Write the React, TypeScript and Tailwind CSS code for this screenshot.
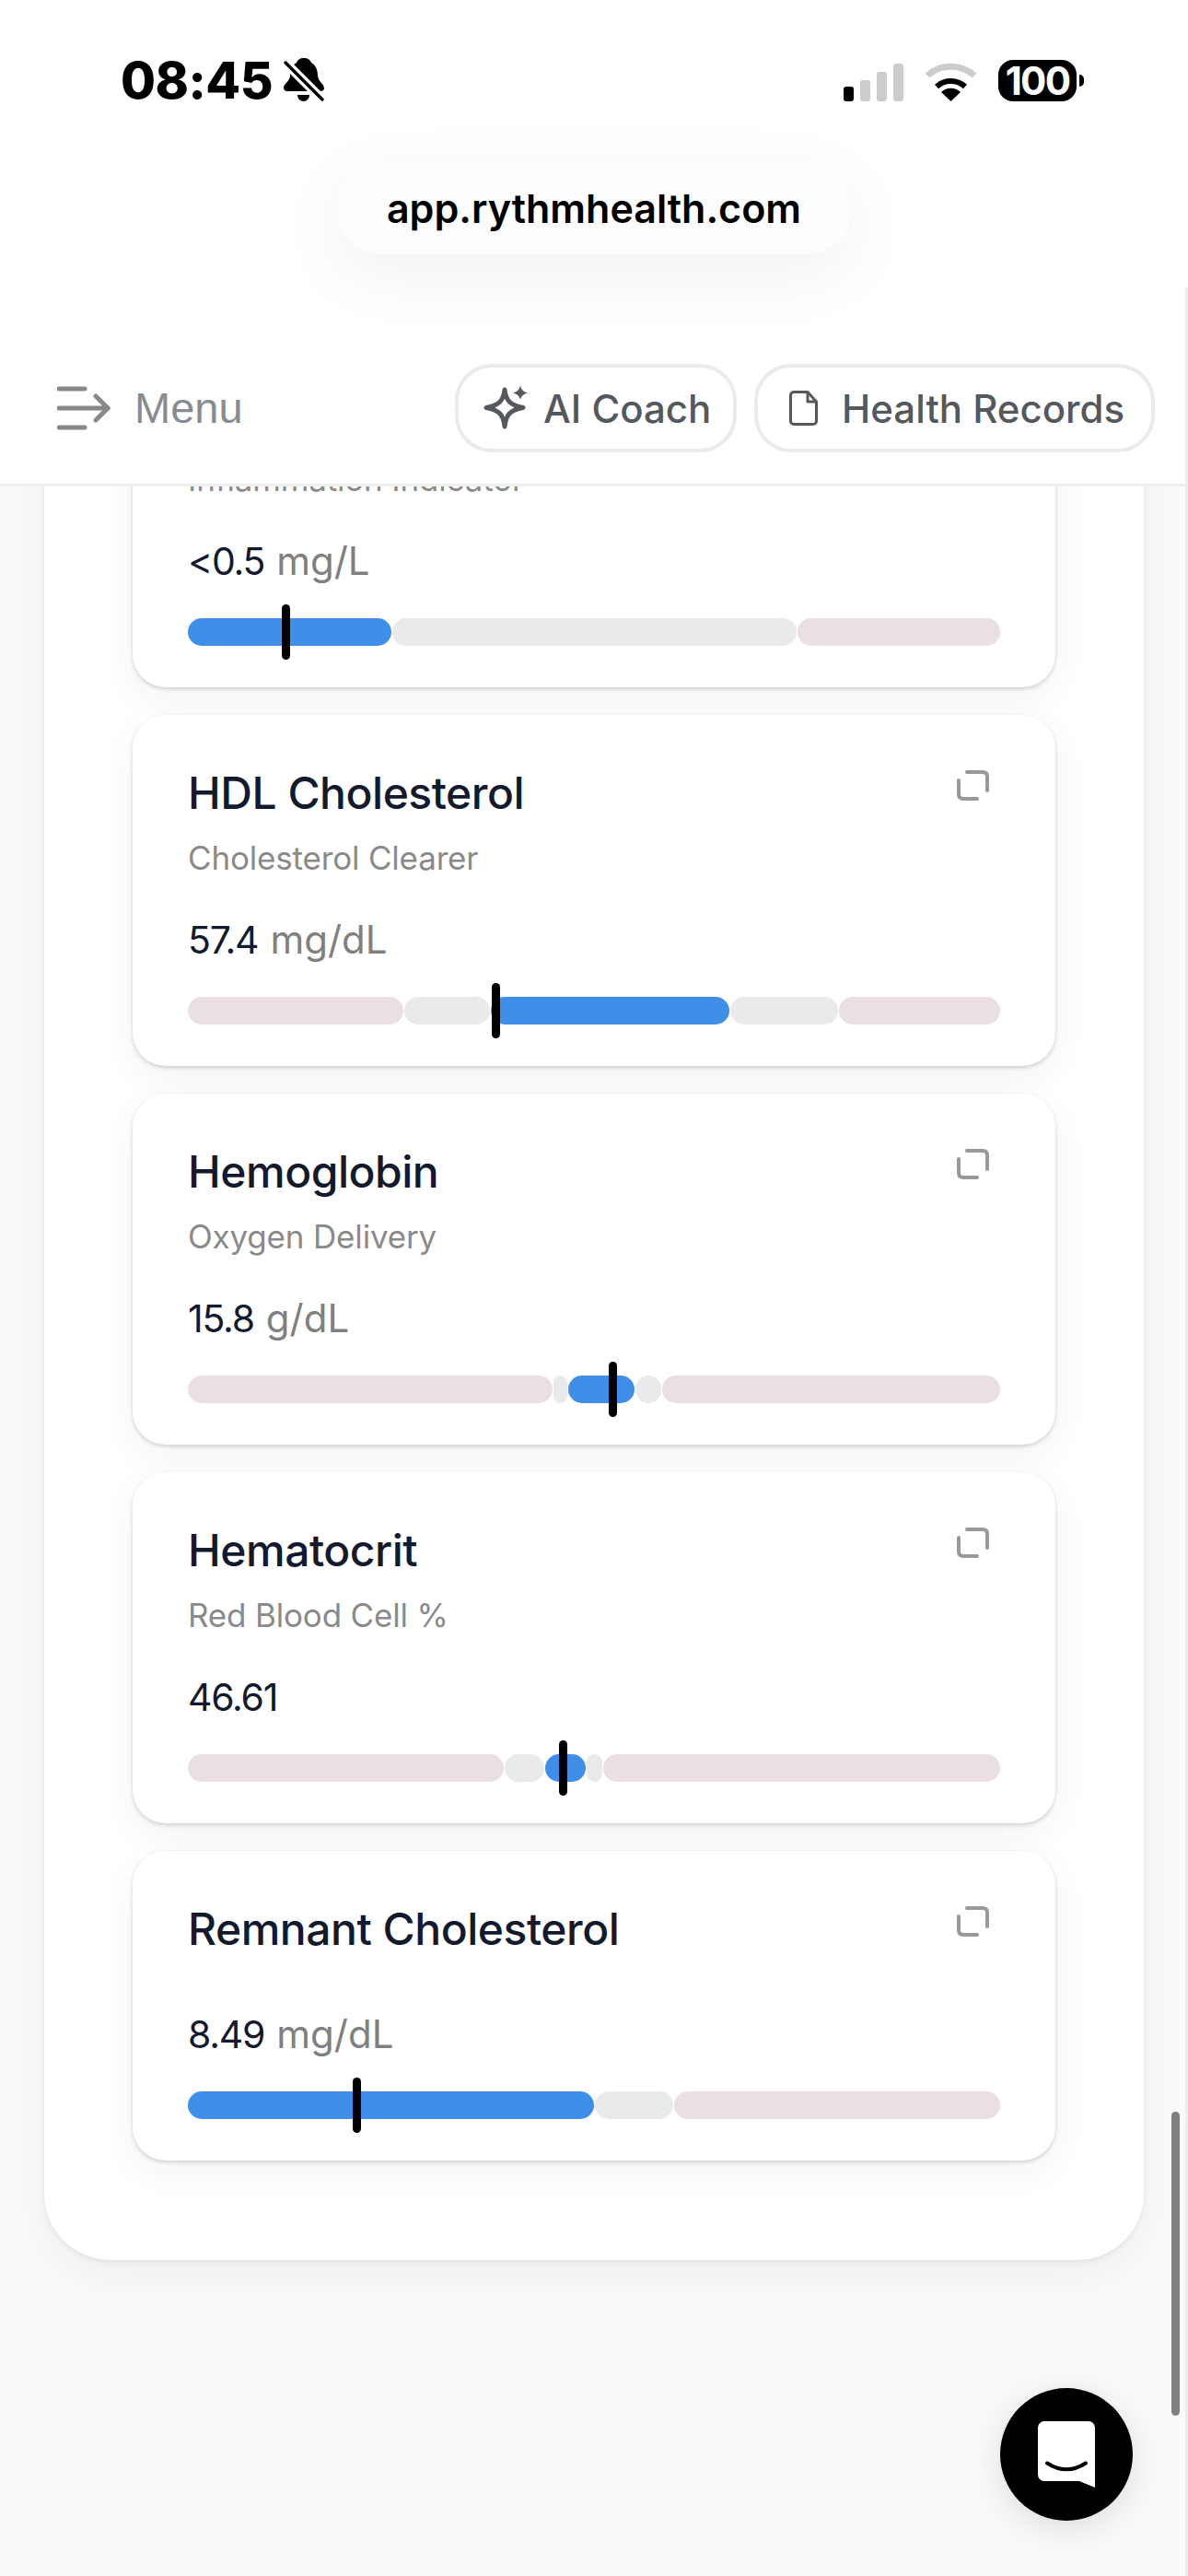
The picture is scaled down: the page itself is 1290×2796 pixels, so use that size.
const BLUE = "bg-[#3f8eea]";
const GRAY = "bg-[#eaeaea]";
const PINK = "bg-[#eadfe3]";

type Seg = { w: number; c: string };
type Marker = {
  title: string;
  sub?: string;
  value: string;
  unit?: string;
  at: number;
  segs: Seg[];
};

const markers: Marker[] = [
  {
    title: "hs-CRP",
    sub: "Inflammation Indicator",
    value: "<0.5",
    unit: "mg/L",
    at: 102,
    segs: [
      { w: 221, c: BLUE },
      { w: 439, c: GRAY },
      { w: 220, c: PINK },
    ],
  },
  {
    title: "HDL Cholesterol",
    sub: "Cholesterol Clearer",
    value: "57.4",
    unit: "mg/dL",
    at: 330,
    segs: [
      { w: 234, c: PINK },
      { w: 93, c: GRAY },
      { w: 259, c: BLUE },
      { w: 117, c: GRAY },
      { w: 175, c: PINK },
    ],
  },
  {
    title: "Hemoglobin",
    sub: "Oxygen Delivery",
    value: "15.8",
    unit: "g/dL",
    at: 457,
    segs: [
      { w: 396, c: PINK },
      { w: 15, c: GRAY },
      { w: 72, c: BLUE },
      { w: 28, c: GRAY },
      { w: 367, c: PINK },
    ],
  },
  {
    title: "Hematocrit",
    sub: "Red Blood Cell %",
    value: "46.61",
    at: 403,
    segs: [
      { w: 343, c: PINK },
      { w: 43, c: GRAY },
      { w: 44, c: BLUE },
      { w: 17, c: GRAY },
      { w: 431, c: PINK },
    ],
  },
  {
    title: "Remnant Cholesterol",
    value: "8.49",
    unit: "mg/dL",
    at: 179,
    segs: [
      { w: 441, c: BLUE },
      { w: 85, c: GRAY },
      { w: 354, c: PINK },
    ],
  },
];

function MarkerCard({ m }: { m: Marker }) {
  return (
    <div className="rounded-[36px] bg-white px-[60px] pt-[57px] pb-[45px] shadow-[0_2px_4px_rgba(0,0,0,0.16),0_12px_40px_rgba(0,0,0,0.05)]">
      <div className="flex items-start justify-between">
        <h3 className="text-[48px] leading-[56px] font-medium tracking-[-0.01em] text-[#141a2e]">{m.title}</h3>
        <svg className="mt-[2px] mr-[12px] h-[36px] w-[36px]" viewBox="0 0 36 36" fill="none" stroke="#999" strokeWidth="4" strokeLinecap="round">
          <path d="M12 3H29Q34 3 34 8V23" />
          <path d="M3 12V27Q3 32 8 32H23" />
        </svg>
      </div>
      {m.sub && <p className="mt-[20px] text-[35px] leading-[44px] tracking-[-0.005em] text-[#8a8a8a]">{m.sub}</p>}
      <p className={`${m.sub ? "mt-[43px]" : "mt-[62px]"} text-[41px] leading-[48px] tracking-[-0.03em] text-[#141a2e]`}>
        {m.value}
        <Unit text={m.unit} />
      </p>
      <div className="relative mt-[38px] flex h-[30px] gap-[1px]">
        {m.segs.map((s, i) => (
          <div key={i} className={`h-full rounded-[15px] ${s.c}`} style={{ width: s.w }} />
        ))}
        <div className="absolute top-[-15px] h-[60px] w-[9px] rounded-full bg-black" style={{ left: m.at }} />
      </div>
    </div>
  );
}

function Unit({ text }: { text?: string }) {
  if (!text) return null;
  return <span className="ml-[13px] text-[42px] tracking-normal text-[#808080]">{text}</span>;
}

function StatusBar() {
  return (
    <div className="mt-[60px] flex h-[55px] items-center justify-between pr-[113px] pl-[131px]">
      <div className="flex items-center">
        <span className="text-[55px] leading-none font-extrabold tracking-[-0.01em] text-black">08:45</span>
        <svg className="ml-[4px] h-[65px] w-[60px]" viewBox="0 0 60 65">
          <path d="M30 8C34 8 37 10 38 13C42 15 45 20 45 27C45 33 52 36 52 41C52 43 50 44 48 44H12C9 44 8 42 8 40C8 36 15 33 15 27C15 20 18 15 22 13C23 10 26 8 30 8Z" fill="#000" />
          <path d="M23 48H36C36 52 33 55 29.5 55C26 55 23 52 23 48Z" fill="#000" />
          <path d="M9 12L50 53" stroke="#fff" strokeWidth="10" />
          <path d="M10 13L50 53" stroke="#000" strokeWidth="3.5" strokeLinecap="round" />
        </svg>
      </div>
      <div className="flex items-end">
        <div className="flex items-end gap-[7px]">
          <div className="h-[16px] w-[11px] rounded-[3px] bg-black" />
          <div className="h-[23px] w-[11px] rounded-[3px] bg-[#cccccc]" />
          <div className="h-[32px] w-[11px] rounded-[3px] bg-[#cccccc]" />
          <div className="h-[41px] w-[11px] rounded-[3px] bg-[#cccccc]" />
        </div>
        <svg className="ml-[23px] h-[42px] w-[57px]" viewBox="0 0 57 42" fill="none">
          <path d="M3 14A38 38 0 0 1 54 14" stroke="#cccccc" strokeWidth="7" />
          <path d="M13 26A23 23 0 0 1 44 26" stroke="#000" strokeWidth="6" />
          <path d="M28.5 42L18 32A15 15 0 0 1 39 32Z" fill="#000" />
        </svg>
        <div className="ml-[23px] flex items-center">
          <div className="flex h-[45px] w-[85px] items-center justify-center rounded-[16px] bg-black text-[42px] leading-none font-bold tracking-[-0.04em] text-white">100</div>
          <div className="ml-[3px] h-[13px] w-[5px] rounded-r-full bg-black" />
        </div>
      </div>
    </div>
  );
}

function Toolbar() {
  const btn =
    "flex h-[96px] items-center rounded-[40px] border-[4px] border-[#ebebeb] bg-white text-[42px] font-medium text-[#55585c]";
  return (
    <div className="mt-[119px] flex items-center justify-between pr-[36px] pl-[62px]">
      <div className="flex items-center">
        <svg className="h-[48px] w-[58px]" viewBox="0 0 58 48" fill="none" stroke="#888888" strokeWidth="5" strokeLinecap="round" strokeLinejoin="round">
          <path d="M2 3H30" />
          <path d="M2 24H55" />
          <path d="M2 45H30" />
          <path d="M42 11L55 24L42 37" />
        </svg>
        <span className="ml-[26px] font-['Liberation_Sans',sans-serif] text-[47px] text-[#888b90]">Menu</span>
      </div>
      <div className="flex gap-[19px]">
        <div className={`${btn} w-[306px] pl-[26px]`}>
          <svg className="h-[50px] w-[52px]" viewBox="0 0 52 50">
            <path d="M24 5C25.500 17 30 22 44 24.500C30 27 25.500 32 24 45C22.500 32 18 27 4 24.500C18 22 22.500 17 24 5Z" fill="none" stroke="#55585c" strokeWidth="5" strokeLinejoin="round" />
            <path d="M41 0C42 5 44 7 49 8.500C44 10 42 12 41 16C40 12 38 10 33 8.500C38 7 40 5 41 0Z" fill="#55585c" />
          </svg>
          <span className="ml-[14px]">AI Coach</span>
        </div>
        <div className={`${btn} w-[435px] pl-[34px]`}>
          <svg className="h-[38px] w-[31px]" viewBox="0 0 31 38" fill="none" stroke="#55585c" strokeWidth="3" strokeLinejoin="round">
            <path d="M5 1.500H20L29.500 12V33A3.500 3.500 0 0 1 26 36.500H5A3.500 3.500 0 0 1 1.500 33V5A3.500 3.500 0 0 1 5 1.500Z" />
            <path d="M20 1.500V12H29.500" />
          </svg>
          <span className="ml-[26px]">Health Records</span>
        </div>
      </div>
    </div>
  );
}

export default function App() {
  return (
    <div className="relative flex h-[2796px] w-[1290px] flex-col overflow-hidden bg-[#fafafa] font-['Inter',sans-serif]">
      {/* Header */}
      <header className="relative z-10 border-b-[3px] border-[#eeeeee] bg-white pb-[34px]">
        <StatusBar />
        <div className="mt-[62px] flex justify-center">
          <div className="flex h-[99px] w-[557px] items-center justify-center rounded-[46px] bg-[#fdfdfd] text-[43px] font-semibold text-black shadow-[0_20px_80px_rgba(0,0,0,0.06)]">
            app.rythmhealth.com
          </div>
        </div>
        <Toolbar />
      </header>

      {/* Results panel, scrolled part way */}
      <main className="min-h-0 flex-1 overflow-hidden">
        <div className="mt-[-220px] ml-[48px] flex w-[1194px] flex-col gap-[30px] rounded-[72px] bg-white px-[96px] pt-[57px] pb-[108px] shadow-[0_2px_6px_rgba(0,0,0,0.07),0_16px_50px_rgba(0,0,0,0.05)]">
          {markers.map((m) => (
            <MarkerCard key={m.title} m={m} />
          ))}
        </div>
      </main>

      {/* Scrollbar */}
      <div className="absolute top-[312px] right-0 bottom-0 z-20 w-[3px] bg-[#ededed]" />
      <div className="absolute top-[2292px] left-[1272px] z-20 h-[330px] w-[9px] rounded-full bg-[#808080]" />

      {/* Chat launcher */}
      <div className="absolute top-[2592px] left-[1086px] z-20 flex h-[144px] w-[144px] items-center justify-center rounded-full bg-black shadow-[0_8px_40px_rgba(0,0,0,0.12)]">
        <svg className="h-[72px] w-[62px]" viewBox="0 0 62 72">
          <path d="M7 0H55A7 7 0 0 1 62 7V72L45 65H7A7 7 0 0 1 0 58V7A7 7 0 0 1 7 0Z" fill="#fff" />
          <path d="M10 45.500Q31 59 52 45.500" fill="none" stroke="#000" strokeWidth="4" strokeLinecap="round" />
        </svg>
      </div>
    </div>
  );
}
